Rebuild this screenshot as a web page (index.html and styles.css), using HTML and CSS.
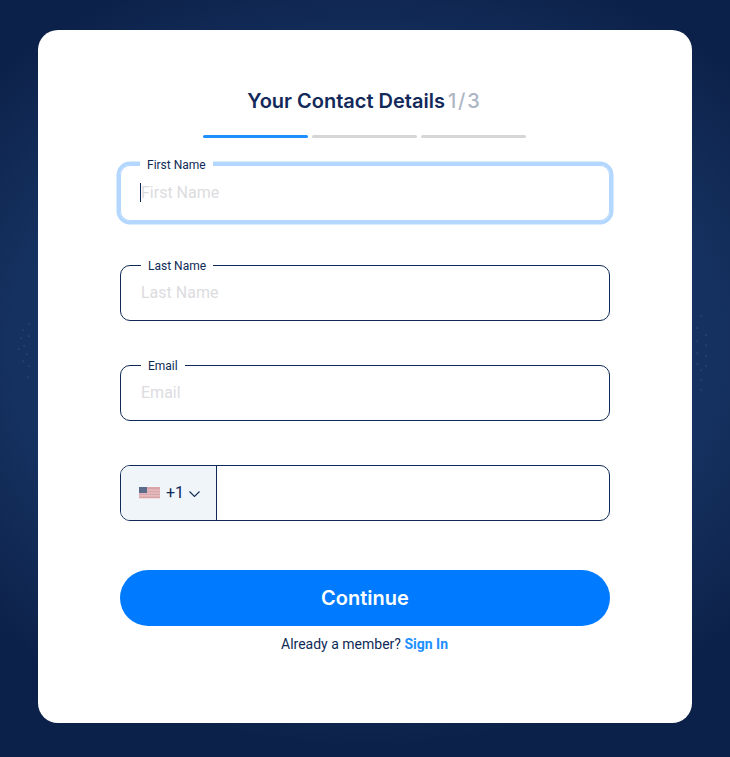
FILE: index.html
```html
<!DOCTYPE html>
<html lang="en">
<head>
  <meta charset="UTF-8">
  <meta name="viewport" content="width=device-width, initial-scale=1.0">
  <link rel="stylesheet" href="styles.css">
  <title>Your Contact Details</title>
</head>
<body>
  <svg class="dots" width="730" height="757" viewBox="0 0 730 757" aria-hidden="true">
    <circle cx="29" cy="324" r=".6"/><circle cx="23" cy="330" r=".6"/><circle cx="21" cy="338" r=".6"/>
    <circle cx="29" cy="336" r=".6"/><circle cx="24" cy="346" r=".6"/><circle cx="19" cy="349" r=".6"/>
    <circle cx="27" cy="354" r=".6"/><circle cx="23" cy="361" r=".6"/><circle cx="29" cy="366" r=".6"/>
    <circle cx="28" cy="377" r=".6"/>
    <circle cx="701" cy="316" r=".6"/><circle cx="697" cy="328" r=".6"/><circle cx="706" cy="335" r=".6"/>
    <circle cx="697" cy="341" r=".6"/><circle cx="706" cy="345" r=".6"/><circle cx="697" cy="353" r=".6"/>
    <circle cx="706" cy="356" r=".6"/><circle cx="697" cy="364" r=".6"/><circle cx="706" cy="366" r=".6"/>
    <circle cx="701" cy="370" r=".6"/><circle cx="701" cy="380" r=".6"/><circle cx="701" cy="390" r=".6"/>
  </svg>

  <main class="card">
    <h1 class="title">Your Contact Details <span class="step">1/3</span></h1>

    <div class="progress">
      <span class="bar active"></span>
      <span class="bar"></span>
      <span class="bar"></span>
    </div>

    <form class="form">
      <div class="field focused">
        <label class="field-label" for="first-name">First Name</label>
        <input id="first-name" type="text" placeholder="First Name">
        <span class="caret"></span>
      </div>

      <div class="field">
        <label class="field-label" for="last-name">Last Name</label>
        <input id="last-name" type="text" placeholder="Last Name">
      </div>

      <div class="field">
        <label class="field-label" for="email">Email</label>
        <input id="email" type="text" placeholder="Email">
      </div>

      <div class="field phone">
        <div class="country">
          <svg class="flag" width="21" height="12" viewBox="0 0 21 12">
            <rect width="21" height="12" fill="#d9a5a9"/>
            <rect y="2.6" width="21" height="1.2" fill="#e6c3c6"/>
            <rect y="5.4" width="21" height="1.2" fill="#e6c3c6"/>
            <rect y="8.2" width="21" height="1.2" fill="#e6c3c6"/>
            <rect y="11" width="21" height="1" fill="#f0dcdd"/>
            <rect width="8" height="6" fill="#5c6a8c"/>
          </svg>
          <span class="dial">+1</span>
          <svg class="chevron" width="11" height="6" viewBox="0 0 11 6">
            <path d="M.5.5l5 5 5-5" fill="none" stroke="#0f2a56" stroke-width="1.1"/>
          </svg>
        </div>
        <input type="text" aria-label="Phone">
      </div>

      <button class="continue" type="button">Continue</button>
    </form>

    <p class="member">Already a member? <a href="#">Sign In</a></p>
  </main>
</body>
</html>
```

FILE: styles.css
```css
* {
  box-sizing: border-box;
}

body {
  position: relative;
  margin: 0;
  height: 757px;
  padding-top: 30px;
  overflow: hidden;
  font-family: Roboto, Arial, sans-serif;
  color: #0f2a56;
  background: radial-gradient(ellipse 520px 400px at 50% 46%, #1a3a72 0%, #15315f 68%, #0c2149 100%);
}

.dots {
  position: absolute;
  top: 0;
  left: 0;
  fill: #4f6a9a;
}

.card {
  position: relative;
  display: flex;
  flex-direction: column;
  width: 654px;
  height: 693px;
  margin-left: 38px;
  padding: 59px 82px 0;
  background-color: #fff;
  border-radius: 20px;
}

.title {
  margin: 0 1px 0 0;
  font-family: Inter, Arial, sans-serif;
  font-size: 20px;
  font-weight: 600;
  line-height: 24px;
  text-align: center;
  color: #12295a;
}

.step {
  margin-left: -2px;
  letter-spacing: 1.8px;
  font-weight: 500;
  color: #aeb6c4;
}

.progress {
  display: flex;
  justify-content: center;
  gap: 4px;
  margin: 22px 1px 0 0;
}

.bar {
  width: 105px;
  height: 3px;
  background-color: #d6d6d6;
  border-radius: 2px;
}

.bar.active {
  background-color: #1e90ff;
}

.form {
  display: flex;
  flex-direction: column;
  gap: 44px;
  margin-top: 27px;
}

.field {
  position: relative;
  height: 56px;
  border: 1px solid #0f2a56;
  border-radius: 10px;
}

.field.focused {
  border-color: #b3d7ff;
  box-shadow: 0 0 0 3.5px #b3d7ff;
}

.field-label {
  position: absolute;
  top: -7px;
  left: 20px;
  padding: 0 7px;
  font-size: 12px;
  line-height: 14px;
  background-color: #fff;
}

.focused .field-label {
  top: -8px;
  left: 19px;
}

.field input {
  display: block;
  width: 100%;
  height: 100%;
  padding: 0 19px 2px 20px;
  font-family: Roboto, Arial, sans-serif;
  font-size: 16px;
  color: #0f2a56;
  background: none;
  border: 0;
  border-radius: 10px;
  outline: none;
}

.field input::placeholder {
  color: #dcdcdf;
  opacity: 1;
}

.caret {
  position: absolute;
  top: 17px;
  left: 19px;
  width: 1px;
  height: 19px;
  background-color: #0f2a56;
}

.phone {
  display: flex;
}

.country {
  display: flex;
  align-items: center;
  flex: none;
  width: 96px;
  padding: 0 0 1px 18px;
  background-color: #f0f5fa;
  border-right: 1px solid #0f2a56;
  border-radius: 9px 0 0 9px;
}

.dial {
  margin-left: 6px;
  font-size: 16px;
}

.chevron {
  margin-left: 5px;
  margin-top: 2px;
}

.continue {
  height: 56px;
  margin-top: 5px;
  font-family: Inter, Arial, sans-serif;
  font-size: 20px;
  font-weight: 600;
  color: #fff;
  background-color: #007bff;
  border: 0;
  border-radius: 28px;
  cursor: pointer;
}

.member {
  margin: 10px 1px 0 0;
  font-size: 14px;
  line-height: 16px;
  text-align: center;
}

.member a {
  font-weight: 700;
  color: #1e90ff;
  text-decoration: none;
}
```
